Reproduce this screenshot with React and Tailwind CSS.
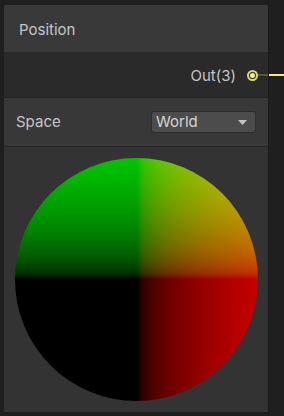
import React from "react";

const srgb = (v) => (v <= 0.0031308 ? 12.92 * v : 1.055 * Math.pow(v, 1 / 2.4) - 0.055);

function Sphere() {
  const steps = 20;
  const k = 0.56;
  const redStops = [<stop key="r0" offset="0" stopColor="rgb(0,0,0)" />, <stop key="r1" offset="0.5" stopColor="rgb(0,0,0)" />];
  const greenStops = [];
  for (let i = 0; i <= steps; i++) {
    const u = i / steps;
    const c = Math.round(srgb(k * u) * 255);
    redStops.push(<stop key={"r" + (i + 2)} offset={0.5 + u * 0.5} stopColor={`rgb(${c},0,0)`} />);
  }
  for (let i = steps; i >= 0; i--) {
    const u = i / steps;
    const c = Math.round(srgb(k * u) * 255);
    greenStops.push(<stop key={"g" + i} offset={(1 - u) * 0.5} stopColor={`rgb(0,${c},0)`} />);
  }
  greenStops.push(<stop key="gend" offset="1" stopColor="rgb(0,0,0)" />);
  return (
    <svg width="243" height="243" viewBox="0 0 243 243">
      <defs>
        <clipPath id="sph">
          <circle cx="121.5" cy="121.5" r="121.5" />
        </clipPath>
        <linearGradient id="red" x1="0" y1="0" x2="1" y2="0">
          {redStops}
        </linearGradient>
        <linearGradient id="green" x1="0" y1="0" x2="0" y2="1">
          {greenStops}
        </linearGradient>
      </defs>
      <g clipPath="url(#sph)" style={{ isolation: "isolate" }}>
        <rect x="0" y="0" width="243" height="243" fill="url(#red)" />
        <rect x="0" y="0" width="243" height="243" fill="url(#green)" style={{ mixBlendMode: "screen" }} />
      </g>
    </svg>
  );
}

export default function App() {
  return (
    <div
      className="relative w-[284px] h-[416px] overflow-hidden bg-[#1f1f1f] pt-[5px] pl-[4px]"
      style={{ fontFamily: "Inter, 'Noto Sans', sans-serif" }}
    >
      <div className="w-[264px] h-[407px] flex flex-col bg-[#333333] rounded-[2px] overflow-hidden">
        <div className="h-[48px] shrink-0 bg-[#393939] border-b border-[#2a2a2a] flex items-center pl-[15px] pt-[3px] text-[15px] text-[#c6c6c6]">
          Position
        </div>
        <div className="h-[44px] shrink-0 bg-[#2a2a2a] flex items-center justify-end pr-[10px] pt-[3px] text-[15px] text-[#c6c6c6]">
          <span>Out(3)</span>
          <span className="ml-[11px] mb-[3px] w-[11px] h-[11px] rounded-full border-2 border-[#d8d87c] flex items-center justify-center">
            <span className="w-[5px] h-[5px] rounded-full bg-[#f4f090]" />
          </span>
        </div>
        <div className="h-[49px] shrink-0 bg-[#383838] border-t border-[#242424] flex items-center justify-between pl-[12px] pr-[12px] text-[15px] text-[#c6c6c6]">
          <span>Space</span>
          <div className="w-[105px] h-[22px] rounded-[3px] bg-[#4c4c4c] border border-[#2e2e2e] flex items-center justify-between pl-[4px] pr-[8px] text-[#d4d4d4]">
            <span>World</span>
            <svg width="9" height="5" viewBox="0 0 9 5">
              <path d="M0 0 H9 L4.5 5 Z" fill="#c4c4c4" />
            </svg>
          </div>
        </div>
        <div className="flex-1 bg-[#333333] border-t border-[#262626] pt-[11px] pl-[11px]">
          <Sphere />
        </div>
      </div>
      <div className="absolute left-[258px] top-[74px] w-[10px] h-[2px] bg-[#55553f]" />
      <div className="absolute left-[268px] top-[74px] w-[16px] h-[2px] bg-[#f2ee78]" />
      <div className="absolute left-[268px] top-0 w-[1px] h-[416px] bg-[#1a1a1a]" />
    </div>
  );
}
